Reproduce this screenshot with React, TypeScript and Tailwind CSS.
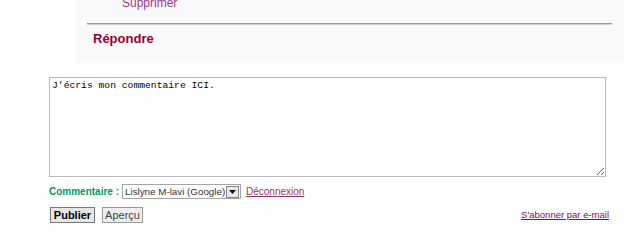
export default function App() {
  return (
    <div className="w-[640px] h-[252px] bg-white relative overflow-hidden" style={{ fontFamily: '"Liberation Sans", Arial, sans-serif' }}>
      <div className="ml-[76px] w-[548px] h-[63px] bg-[#f9f9f9] flex flex-col">
        <div className="pl-[46px] text-[12px] leading-[12px] text-[#993399] -mt-[3px] h-[12px]">Supprimer</div>
        <div className="ml-[11px] mr-[12px] mt-[14px] h-[2px] bg-[#9a9a9a] border-b border-[#d0d0d0]"></div>
        <div className="pl-[17px] mt-[4px] text-[13px] font-bold text-[#990033]">Répondre</div>
      </div>
      <div className="ml-[49px] mt-[14px]">
        <textarea
          className="block w-[557px] h-[100px] border border-[#bbbbbb] bg-white px-[2px] py-[2px] text-[9.7px] leading-[12px] text-black resize"
          style={{ fontFamily: '"Liberation Mono", "Courier New", monospace' }}
          defaultValue="J'écris mon commentaire ICI."
        />
        <div className="flex items-center mt-[7px] text-[10px]">
          <span className="text-[#009966] font-bold mr-[3px]">Commentaire :</span>
          <div className="flex items-center justify-between w-[119px] h-[15px] border border-[#a5a5a5] bg-white">
            <span className="pl-[2px] text-[9.8px] text-[#333] leading-[13px] whitespace-nowrap">Lislyne M-lavi (Google)</span>
            <div className="w-[13px] h-[12px] shrink-0 border border-[#888] bg-[#e8e8e8] mr-px flex items-center justify-center">
              <svg width="7" height="4" viewBox="0 0 7 4"><path d="M0 0h7L3.5 4z" fill="#111" /></svg>
            </div>
          </div>
          <a className="ml-[5px] text-[10px] text-[#993366] underline">Déconnexion</a>
        </div>
        <div className="flex items-center mt-[8px] text-[11px]">
          <button className="h-[16px] w-[45px] border border-[#777] bg-[#e6e6e6] font-bold text-black leading-[12px] ml-px">Publier</button>
          <button className="h-[16px] w-[41px] ml-[7px] border border-[#999] bg-[#eeeeee] text-[#444] leading-[12px]">Aperçu</button>
          <a className="ml-auto mr-[31px] text-[9.5px] text-[#990066] underline">S'abonner par e-mail</a>
        </div>
      </div>
    </div>
  );
}
